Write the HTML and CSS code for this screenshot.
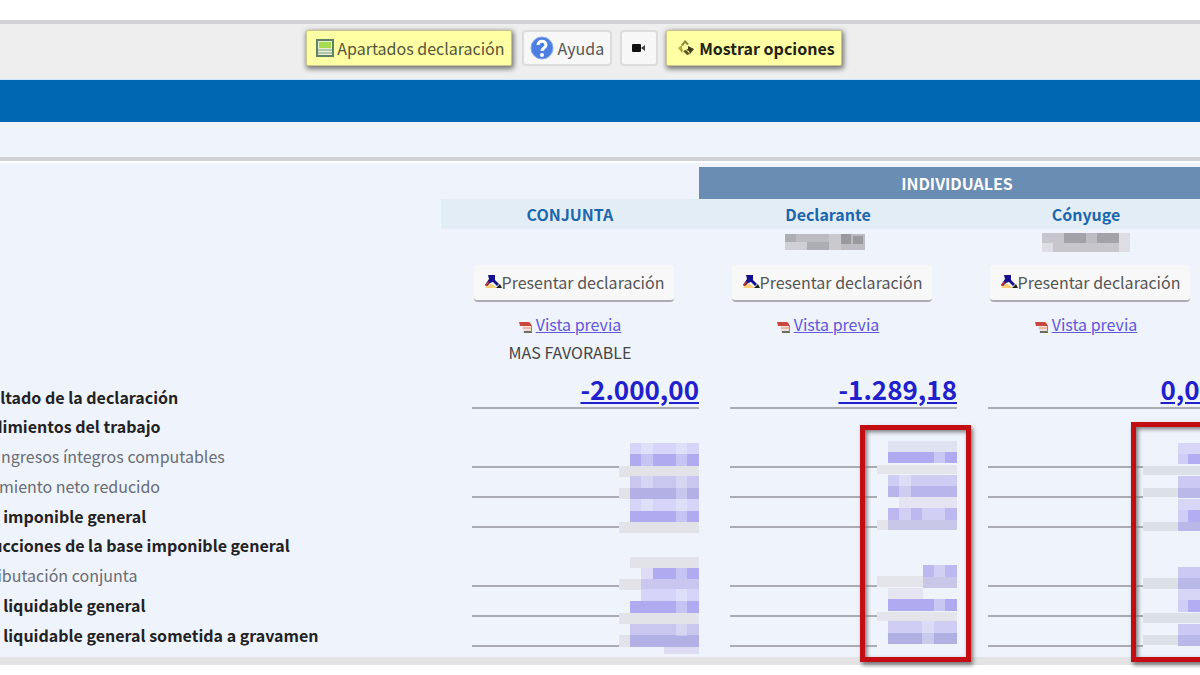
FILE: index.html
```
<!DOCTYPE html>
<html lang="es">
  <head>
    <meta charset="UTF-8" />
    <meta name="viewport" content="width=device-width, initial-scale=1.0" />
    <title>Resumen de declaraciones</title>
    <link rel="stylesheet" href="styles.css">
  </head>
  <body>
    <!-- iconos compartidos -->
    <svg class="defs" aria-hidden="true">
      <symbol id="icon-send" viewBox="0 0 18 16">
        <path d="M1 14l3-5 4 1 5 4z" fill="#ffd07a" />
        <path d="M4 1h7v5l4 4-2 2-4-4-3 1-3 3-2-1 4-6z" fill="#17108c" />
        <path d="M1 11l3-4 1 2-3 3z" fill="#d0392b" />
        <path d="M12 14l4-4 2 4z" fill="#222" />
      </symbol>
      <symbol id="icon-pdf" viewBox="0 0 14 14">
        <path d="M3 2h8l2 3v8H4z" fill="#e9e4dc" />
        <path d="M0 2h10l2 2v2H1z" fill="#c9473c" />
        <path d="M4 7h8v2H4z" fill="#f2b9a6" />
        <path d="M5 11h8v2H5z" fill="#6f6a62" />
        <path d="M12 5h1v7h-1z" fill="#8f8a80" />
      </symbol>
    </svg>

    <div class="toolbar">
      <button type="button" class="btn btn-yellow">
        <svg class="icon-list" viewBox="0 0 18 18" aria-hidden="true">
          <rect x="1" y="1" width="16" height="16" fill="#e6efd0" stroke="#5f8166" stroke-width="2" />
          <rect x="3" y="3" width="12" height="6" fill="#a8dc50" />
          <path d="M2 11h14M2 14h14" stroke="#7d9c86" />
        </svg>Apartados declaración
      </button>
      <button type="button" class="btn btn-help">
        <svg class="icon-help" viewBox="0 0 24 24" aria-hidden="true">
          <circle cx="12" cy="12" r="11" fill="#4d7fe3" stroke="#86a9ee" />
          <path d="M8 9c0-5 8-5 8 0 0 3-4 3-4 6" fill="none" stroke="#fff" stroke-width="3" />
          <circle cx="12" cy="19" r="2" fill="#fff" />
        </svg>Ayuda
      </button>
      <button type="button" class="btn btn-video" aria-label="Vídeo">
        <svg class="icon-video" viewBox="0 0 14 8" aria-hidden="true">
          <rect width="9" height="8" rx="1" fill="#111" />
          <path d="M9 4l4-3v6z" fill="#444" />
        </svg>
      </button>
      <button type="button" class="btn btn-yellow btn-strong">
        <svg class="icon-options" viewBox="0 0 18 18" aria-hidden="true">
          <path d="M8 1l4 4-2 1-2-2-2 3-2-1z" fill="#8d8636" />
          <path d="M5 6L1 9l4 5 1-3-1-2z" fill="#b5a93c" />
          <path d="M6 12l4 4 3-1-4-4z" fill="#5d5722" />
          <path d="M11 7l6 3-4 5-1-3-3-1 2-1z" fill="#3f3a18" />
        </svg>Mostrar opciones
      </button>
    </div>
    <div class="banner"></div>
    <div class="spacer"></div>

    <main class="content">
      <table class="summary">
        <colgroup>
          <col class="col-label">
          <col>
          <col>
          <col>
        </colgroup>
        <thead>
          <tr class="row-group">
            <td colspan="2"></td>
            <th colspan="2" class="group">INDIVIDUALES</th>
          </tr>
          <tr class="row-names">
            <td></td>
            <th>CONJUNTA</th>
            <th>Declarante</th>
            <th>Cónyuge</th>
          </tr>
        </thead>
        <tbody>
          <tr class="row-nif">
            <td></td>
            <td></td>
            <td>
              <svg class="nif" viewBox="0 0 88 20" aria-hidden="true">
                <path d="M1 2h80v16H1z" fill="#bcbcc2" />
                <path d="M1 2h11v8H1zM23 10h22v8H23z" fill="#adadb4" />
                <path d="M1 10h22v8H1z" fill="#cfcfd6" />
                <path d="M45 2h12v16H45z" fill="#c9c9ce" />
                <path d="M57 2h10v10H57zM69 4h10v8H69z" fill="#99999e" />
              </svg>
            </td>
            <td>
              <svg class="nif" viewBox="0 0 88 20" aria-hidden="true">
                <path d="M0 1h88v19H0z" fill="#dddde3" />
                <path d="M0 1h22v10H0zM11 11h66v9H11z" fill="#c6c6cc" />
                <path d="M22 1h22v10H22zM55 1h22v10H55z" fill="#a2a2a8" />
                <path d="M44 1h11v10H44z" fill="#bdbdc2" />
              </svg>
            </td>
          </tr>
          <tr class="row-send">
            <td></td>
            <td><button type="button" class="send"><svg class="icon-send" aria-hidden="true"><use href="#icon-send" /></svg>Presentar declaración</button></td>
            <td><button type="button" class="send"><svg class="icon-send" aria-hidden="true"><use href="#icon-send" /></svg>Presentar declaración</button></td>
            <td><button type="button" class="send"><svg class="icon-send" aria-hidden="true"><use href="#icon-send" /></svg>Presentar declaración</button></td>
          </tr>
          <tr class="row-preview">
            <td></td>
            <td><svg class="icon-pdf" aria-hidden="true"><use href="#icon-pdf" /></svg><a href="#">Vista previa</a></td>
            <td><svg class="icon-pdf" aria-hidden="true"><use href="#icon-pdf" /></svg><a href="#">Vista previa</a></td>
            <td><svg class="icon-pdf" aria-hidden="true"><use href="#icon-pdf" /></svg><a href="#">Vista previa</a></td>
          </tr>
          <tr class="row-best">
            <td></td>
            <td>MAS FAVORABLE</td>
            <td></td>
            <td></td>
          </tr>
          <tr class="row-result">
            <th scope="row">Resultado de la declaración</th>
            <td><div class="line"><a href="#">-2.000,00</a></div></td>
            <td><div class="line"><a href="#">-1.289,18</a></div></td>
            <td><div class="line"><a href="#">0,00</a></div></td>
          </tr>
          <tr class="row-title">
            <th scope="row">Rendimientos del trabajo</th>
            <td></td>
            <td></td>
            <td></td>
          </tr>
          <tr class="row-value">
            <th scope="row" class="light">Total ingresos íntegros computables</th>
            <td class="masked">
              <div class="line"></div>
              <!-- importes ocultos -->
              <svg class="mosaic" viewBox="0 0 92 216" aria-hidden="true">
                <path d="M12 3h80v211H12z" fill="#eff3fb" />
                <g fill="#e1e3e8">
                  <path d="M12 26h80v11H12zM12 48h12v11H12zM12 82h80v11H12zM23 117h69v11H23zM12 139h80v11H12zM12 173h80v11H12zM12 195h12v12H12z" />
                </g>
                <path d="M23 3h69v11H23zM23 59h69v12H23zM34 149h58v12H34z" fill="#d6d4f8" />
                <path d="M23 14h69v12H23zM23 71h69v11H23zM46 128h46v11H46zM23 161h69v12H23z" fill="#b0abf0" />
                <path d="M23 36h69v12H23zM34 139h58v10H34zM23 184h69v12H23z" fill="#c9c6ef" />
                <path d="M23 48h69v11H23zM23 195h69v12H23z" fill="#b3b0e5" />
                <path d="M34 128h12v11H34zM57 207h35v7H57z" fill="#dedbf5" />
                <g fill="#eff3fb" opacity="0.35">
                  <path d="M34 3h12v23H34zM34 36h12v12H34zM34 59h12v12H34zM69 128h11v11H69zM69 3h11v23H69zM69 36h11v23H69zM69 59h11v23H69zM69 149h11v24H69zM69 184h11v12H69z" />
                </g>
              </svg>
            </td>
            <td class="masked">
              <div class="line"></div>
              <svg class="mosaic" viewBox="0 0 92 216" aria-hidden="true">
                <path d="M12 3h80v211H12z" fill="#eff3fb" />
                <path d="M12 25h80v9H12zM12 136h46v11H12zM12 172h80v9H12zM12 80h12v10H12z" fill="#e3e5ea" />
                <path d="M23 1h69v11H23z" fill="#dfe2f0" />
                <path d="M23 12h69v11H23zM23 159h69v12H23z" fill="#b0abf0" />
                <path d="M23 35h69v11H23zM23 181h69v12H23z" fill="#cfcdf3" />
                <path d="M23 46h69v11H23z" fill="#b8b4ec" />
                <path d="M23 193h69v11H23z" fill="#b0b0e3" />
                <path d="M34 57h58v11H34zM23 148h35v11H23z" fill="#e5e4f3" />
                <path d="M23 68h69v12H23zM58 125h34v12H58z" fill="#bdb9f0" />
                <path d="M23 80h69v10H23zM58 137h34v11H58z" fill="#c8c7e8" />
                <g fill="#eff3fb" opacity="0.4">
                  <path d="M69 12h11v11H69zM34 35h12v22H34zM34 68h12v12H34zM57 68h23v12H57zM69 125h11v12H69zM69 159h11v12H69zM57 181h12v23H57z" />
                </g>
              </svg>
              <div class="highlight"></div>
            </td>
            <td class="masked">
              <div class="line"></div>
              <svg class="mosaic" viewBox="0 0 92 216" aria-hidden="true">
                <path d="M20 3h72v211H20z" fill="#eff3fb" />
                <path d="M20 26h72v9H20zM20 48h72v9H20zM20 82h72v9H20zM20 138h72v11H20zM20 173h72v10H20zM20 195h72v10H20z" fill="#dce1e8" />
                <path d="M55 3h37v11H55zM55 59h37v11H55zM55 149h37v11H55z" fill="#d7d6f7" />
                <path d="M55 14h37v10H55zM55 70h37v12H55zM55 160h37v12H55z" fill="#b3adf2" />
                <path d="M55 36h37v12H55zM55 127h37v11H55zM55 184h37v11H55z" fill="#ccc9f5" />
                <path d="M55 48h37v10H55zM55 82h37v9H55zM55 138h37v11H55zM55 195h37v11H55z" fill="#bab7e9" />
                <path d="M55 14h10v10H55zM55 70h10v12H55zM55 160h10v12H55z" fill="#d0cdf7" />
              </svg>
              <div class="highlight highlight-tall"></div>
            </td>
          </tr>
          <tr class="row-value">
            <th scope="row" class="light">Rendimiento neto reducido</th>
            <td><div class="line"></div></td>
            <td><div class="line"></div></td>
            <td><div class="line"></div></td>
          </tr>
          <tr class="row-value">
            <th scope="row">Base imponible general</th>
            <td><div class="line"></div></td>
            <td><div class="line"></div></td>
            <td><div class="line"></div></td>
          </tr>
          <tr class="row-title">
            <th scope="row">Reducciones de la base imponible general</th>
            <td></td>
            <td></td>
            <td></td>
          </tr>
          <tr class="row-value">
            <th scope="row" class="light">Por tributación conjunta</th>
            <td><div class="line"></div></td>
            <td><div class="line"></div></td>
            <td><div class="line"></div></td>
          </tr>
          <tr class="row-value">
            <th scope="row">Base liquidable general</th>
            <td><div class="line"></div></td>
            <td><div class="line"></div></td>
            <td><div class="line"></div></td>
          </tr>
          <tr class="row-value">
            <th scope="row">Base liquidable general sometida a gravamen</th>
            <td><div class="line"></div></td>
            <td><div class="line"></div></td>
            <td><div class="line"></div></td>
          </tr>
        </tbody>
      </table>
    </main>
  </body>
</html>
```
FILE: styles.css
```
body {
  box-sizing: border-box;
  min-height: 100vh;
  margin: 0;
  padding-top: 20px;
  font-family: "Noto Sans CJK SC", "Open Sans", sans-serif;
  font-size: 16px;
  line-height: 24px;
  color: #222;
  background-color: #fff;
  overflow: hidden;
}

.defs {
  position: absolute;
  width: 0;
  height: 0;
}

/* ===== barra superior ===== */
.toolbar {
  display: flex;
  justify-content: center;
  align-items: center;
  gap: 8px;
  padding: 6px 52px 13px 0;
  border-top: 4px solid #d3d3d5;
  background-color: #eee;
}

.btn {
  display: flex;
  align-items: center;
  justify-content: center;
  box-sizing: border-box;
  height: 36px;
  padding: 0 6px;
  font-family: inherit;
  font-size: 16px;
  color: #555;
  background-color: #f7f7f7;
  border: 2px solid #dcdcde;
  border-radius: 4px;
  cursor: pointer;
}

.btn-yellow {
  color: #55553c;
  background-color: #ffffa3;
  border: 1px solid #c5c58c;
  border-radius: 2px;
  box-shadow: 1px 2px 5px 1px #777;
}

.btn-strong {
  font-weight: bold;
  color: #22220f;
}

.btn-help {
  margin-left: 2px;
}

.btn-video {
  width: 38px;
}

.icon-list {
  width: 18px;
  height: 18px;
  margin: 0 3px;
}

.icon-help {
  width: 24px;
  height: 24px;
  margin-right: 4px;
}

.icon-video {
  width: 14px;
  height: 8px;
}

.icon-options {
  width: 18px;
  height: 18px;
  margin: 0 4px;
}

.banner {
  height: 42px;
  background-color: #0067b3;
  border-top: 1px solid #c9e8f7;
}

.spacer {
  height: 35px;
  background-color: #eff3fa;
  border-bottom: 4px solid #cfd0d4;
}

/* ===== tabla resumen ===== */
.content {
  padding: 4px 0 10px;
  background-color: #eff3fb;
  border-top: 2px solid #fff;
  border-bottom: 8px solid #e3e3e4;
}

.summary {
  width: calc(100% + 59px);
  margin-left: -44px;
  table-layout: fixed;
  border-collapse: collapse;
}

.col-label {
  width: 485px;
}

.summary th,
.summary td {
  padding: 0;
  text-align: center;
}

.summary th[scope="row"] {
  padding: 5px 0 0 6px;
  text-align: left;
  white-space: nowrap;
}

.row-group {
  height: 32px;
}

.summary .group {
  color: #fff;
  background-color: #6a8db3;
}

.row-names {
  height: 30px;
}

.row-names th {
  color: #1c66ae;
  background-color: #e2edf6;
}

.row-nif {
  height: 26px;
}

.nif {
  display: block;
  width: 88px;
  height: 20px;
  margin: 0 auto;
}

.row-send {
  height: 56px;
}

.send {
  display: inline-flex;
  align-items: center;
  height: 37px;
  margin-left: 8px;
  padding: 0 10px;
  font-family: inherit;
  font-size: 16px;
  color: #555;
  background-color: #f8f8f9;
  border: 0;
  border-bottom: 2px solid #aaacb2;
  border-radius: 4px;
  cursor: pointer;
}

.icon-send {
  width: 18px;
  height: 16px;
}

.row-preview {
  height: 25px;
}

.summary a {
  color: #2020cc;
}

.summary .row-preview a {
  color: #6058dd;
}

.icon-pdf {
  width: 14px;
  height: 14px;
  margin-right: 3px;
  vertical-align: -3px;
}

.row-best {
  height: 31px;
  color: #444;
}

.row-result {
  height: 42px;
}

.summary .row-result th[scope="row"] {
  padding-top: 18px;
}

.row-title {
  height: 29px;
}

.row-value {
  height: 30px;
}

.summary th.light {
  padding-left: 0;
  font-weight: normal;
  color: #686c74;
}

.line {
  box-sizing: border-box;
  height: 30px;
  margin-left: 31px;
  border-bottom: 2px solid #aaacb1;
}

.row-result .line {
  height: 42px;
  font-size: 26px;
  font-weight: bold;
  line-height: 44px;
  text-align: right;
}

/* pixelado sobre los importes */
.masked {
  position: relative;
}

.mosaic {
  position: absolute;
  top: 2px;
  right: 0;
  width: 92px;
  height: 216px;
}

.highlight {
  position: absolute;
  top: -13px;
  right: -14px;
  box-sizing: border-box;
  width: 111px;
  height: 237px;
  border: 5px solid #c40d12;
  box-shadow: 2px 3px 4px #777, inset 2px 2px 4px #777;
}

.highlight-tall {
  top: -16px;
  right: -27px;
  height: 240px;
}
```
